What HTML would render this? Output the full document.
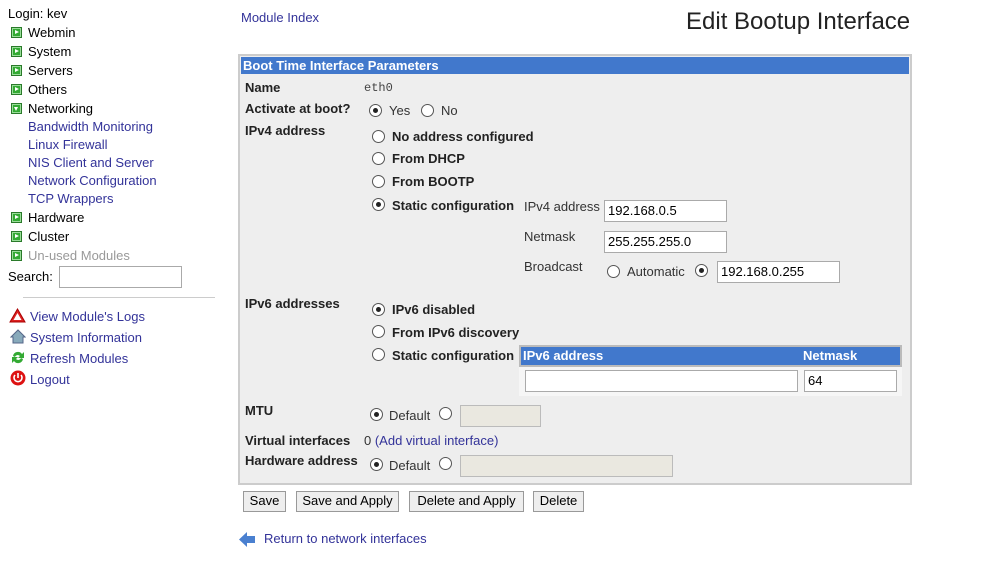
<!DOCTYPE html>
<html><head><meta charset="utf-8"><style>
body{margin:0;width:994px;height:568px;background:#fff;font-family:"Liberation Sans",Arial,sans-serif;font-size:13px;color:#000;position:relative;overflow:hidden}
.t{position:absolute;white-space:nowrap;line-height:14px}
.b{font-weight:bold;color:#222}
.l{color:#333399}
.g{position:absolute;width:9px;height:9px;background:#3a3;border:1px solid #2a7a2a;box-shadow:inset 0 0 0 1px #9d9}
.g:after{content:"";position:absolute;left:3px;top:2px;border-left:4px solid #fff;border-top:2.5px solid transparent;border-bottom:2.5px solid transparent}
.g.d:after{left:2px;top:3px;border-top:4px solid #fff;border-left:2.5px solid transparent;border-right:2.5px solid transparent;border-bottom:0}
.r{position:absolute;width:11px;height:11px;border:1px solid #555;border-radius:50%;background:#fff}
.r.c:after{content:"";position:absolute;left:3px;top:3px;width:5px;height:5px;border-radius:50%;background:#222}
.i{position:absolute;background:#fff;border:1px solid #aaa;box-sizing:border-box;font-size:13px;padding:3px 0 0 3px;line-height:14px}
.i.dis{background:#eae8e0;border-color:#bbb}
.btn{position:absolute;top:491px;height:21px;background:#eee;border:1px solid #999;box-sizing:border-box;font-size:13px;text-align:center;line-height:18px}
</style></head><body>
<div class="t" style="left:8px;top:7px">Login: kev</div>
<div class="g" style="left:11px;top:27px"></div><div class="t" style="left:28px;top:26px">Webmin</div>
<div class="g" style="left:11px;top:46px"></div><div class="t" style="left:28px;top:45px">System</div>
<div class="g" style="left:11px;top:65px"></div><div class="t" style="left:28px;top:64px">Servers</div>
<div class="g" style="left:11px;top:84px"></div><div class="t" style="left:28px;top:83px">Others</div>
<div class="g d" style="left:11px;top:103px"></div><div class="t" style="left:28px;top:102px">Networking</div>
<div class="t l" style="left:28px;top:120px">Bandwidth Monitoring</div>
<div class="t l" style="left:28px;top:138px">Linux Firewall</div>
<div class="t l" style="left:28px;top:156px">NIS Client and Server</div>
<div class="t l" style="left:28px;top:174px">Network Configuration</div>
<div class="t l" style="left:28px;top:192px">TCP Wrappers</div>
<div class="g" style="left:11px;top:212px"></div><div class="t" style="left:28px;top:211px">Hardware</div>
<div class="g" style="left:11px;top:231px"></div><div class="t" style="left:28px;top:230px">Cluster</div>
<div class="g" style="left:11px;top:250px"></div><div class="t" style="left:28px;top:249px;color:#999">Un-used Modules</div>
<div class="t" style="left:8px;top:270px">Search:</div>
<div class="i" style="left:59px;top:266px;width:123px;height:22px"></div>
<div style="position:absolute;left:23px;top:297px;width:192px;height:1px;background:#ccc"></div>
<svg style="position:absolute;left:9px;top:308px" width="17" height="15"><path d="M8.5 1 L16 14 L1 14 Z" fill="#d22" stroke="#a00"/><path d="M8.5 5 L12.5 12 L4.5 12 Z" fill="#fff"/></svg>
<div class="t l" style="left:30px;top:310px">View Module's Logs</div>
<svg style="position:absolute;left:10px;top:329px" width="16" height="15"><path d="M1 8 L8 1 L15 8 L13 8 L13 14 L3 14 L3 8 Z" fill="#8ab" stroke="#568"/></svg>
<div class="t l" style="left:30px;top:331px">System Information</div>
<svg style="position:absolute;left:11px;top:350px" width="14" height="15"><path d="M2 6 A5 5 0 0 1 11 4 L13 2 L13 8 L7 8 L9 6 A3 3 0 0 0 4 7 Z M12 9 A5 5 0 0 1 3 11 L1 13 L1 7 L7 7 L5 9 A3 3 0 0 0 10 8 Z" fill="#3a3"/></svg>
<div class="t l" style="left:30px;top:352px">Refresh Modules</div>
<svg style="position:absolute;left:10px;top:370px" width="16" height="16"><circle cx="8" cy="8" r="7.5" fill="#d11"/><path d="M5 5 A4 4 0 1 0 11 5" fill="none" stroke="#fff" stroke-width="1.6"/><path d="M8 3 V8" stroke="#fff" stroke-width="1.6"/></svg>
<div class="t l" style="left:30px;top:373px">Logout</div>

<div class="t l" style="left:241px;top:11px">Module Index</div>
<div class="t" style="left:686px;top:8px;font-size:24px;line-height:28px;color:#222">Edit Bootup Interface</div>

<div style="position:absolute;left:238px;top:54px;width:670px;height:427px;border:2px solid #ccc;background:#eee"></div>
<div style="position:absolute;left:241px;top:57px;width:668px;height:17px;background:#4178cc"></div>
<div class="t" style="left:243px;top:59px;color:#fff;font-weight:bold">Boot Time Interface Parameters</div>

<div class="t b" style="left:245px;top:81px">Name</div>
<div class="t" style="left:364px;top:81px;font-family:'Liberation Mono',monospace;font-size:12px;color:#444">eth0</div>
<div class="t b" style="left:245px;top:102px">Activate at boot?</div>
<div class="r c" style="left:369px;top:104px"></div><div class="t" style="left:389px;top:104px;color:#333">Yes</div>
<div class="r" style="left:421px;top:104px"></div><div class="t" style="left:441px;top:104px;color:#333">No</div>
<div class="t b" style="left:245px;top:124px">IPv4 address</div>
<div class="r" style="left:372px;top:130px"></div><div class="t b" style="left:392px;top:130px">No address configured</div>
<div class="r" style="left:372px;top:152px"></div><div class="t b" style="left:392px;top:152px">From DHCP</div>
<div class="r" style="left:372px;top:175px"></div><div class="t b" style="left:392px;top:175px">From BOOTP</div>
<div class="r c" style="left:372px;top:198px"></div><div class="t b" style="left:392px;top:199px">Static configuration</div>
<div class="t" style="left:524px;top:200px;color:#333">IPv4 address</div>
<div class="i" style="left:604px;top:200px;width:123px;height:22px">192.168.0.5</div>
<div class="t" style="left:524px;top:230px;color:#333">Netmask</div>
<div class="i" style="left:604px;top:231px;width:123px;height:22px">255.255.255.0</div>
<div class="t" style="left:524px;top:260px;color:#333">Broadcast</div>
<div class="r" style="left:607px;top:265px"></div><div class="t" style="left:627px;top:265px;color:#333">Automatic</div>
<div class="r c" style="left:695px;top:264px"></div>
<div class="i" style="left:717px;top:261px;width:123px;height:22px">192.168.0.255</div>

<div class="t b" style="left:245px;top:297px">IPv6 addresses</div>
<div class="r c" style="left:372px;top:303px"></div><div class="t b" style="left:392px;top:303px">IPv6 disabled</div>
<div class="r" style="left:372px;top:325px"></div><div class="t b" style="left:392px;top:326px">From IPv6 discovery</div>
<div class="r" style="left:372px;top:348px"></div><div class="t b" style="left:392px;top:349px">Static configuration</div>
<div style="position:absolute;left:519px;top:345px;width:383px;height:51px;background:#f6f6f6"></div>
<div style="position:absolute;left:519px;top:345px;width:379px;height:18px;background:#4178cc;border:2px solid #bbb"></div>
<div class="t" style="left:523px;top:349px;color:#fff;font-weight:bold">IPv6 address</div>
<div class="t" style="left:803px;top:349px;color:#fff;font-weight:bold">Netmask</div>
<div class="i" style="left:525px;top:370px;width:273px;height:22px"></div>
<div class="i" style="left:804px;top:370px;width:93px;height:22px">64</div>

<div class="t b" style="left:245px;top:404px">MTU</div>
<div class="r c" style="left:370px;top:408px"></div><div class="t" style="left:389px;top:409px;color:#333">Default</div>
<div class="r" style="left:439px;top:407px"></div>
<div class="i dis" style="left:460px;top:405px;width:81px;height:22px"></div>
<div class="t b" style="left:245px;top:434px">Virtual interfaces</div>
<div class="t" style="left:364px;top:434px;color:#333">0 <span class="l">(Add virtual interface)</span></div>
<div class="t b" style="left:245px;top:454px">Hardware address</div>
<div class="r c" style="left:370px;top:458px"></div><div class="t" style="left:389px;top:459px;color:#333">Default</div>
<div class="r" style="left:439px;top:457px"></div>
<div class="i dis" style="left:460px;top:455px;width:213px;height:22px"></div>

<div class="btn" style="left:243px;width:43px">Save</div>
<div class="btn" style="left:296px;width:103px">Save and Apply</div>
<div class="btn" style="left:409px;width:115px">Delete and Apply</div>
<div class="btn" style="left:533px;width:51px">Delete</div>

<svg style="position:absolute;left:238px;top:530px" width="18" height="19"><path d="M1 9.5 L9 2 L9 6 L17 6 L17 13 L9 13 L9 17 Z" fill="#4a80d0"/></svg>
<div class="t l" style="left:264px;top:532px">Return to network interfaces</div>
</body></html>
